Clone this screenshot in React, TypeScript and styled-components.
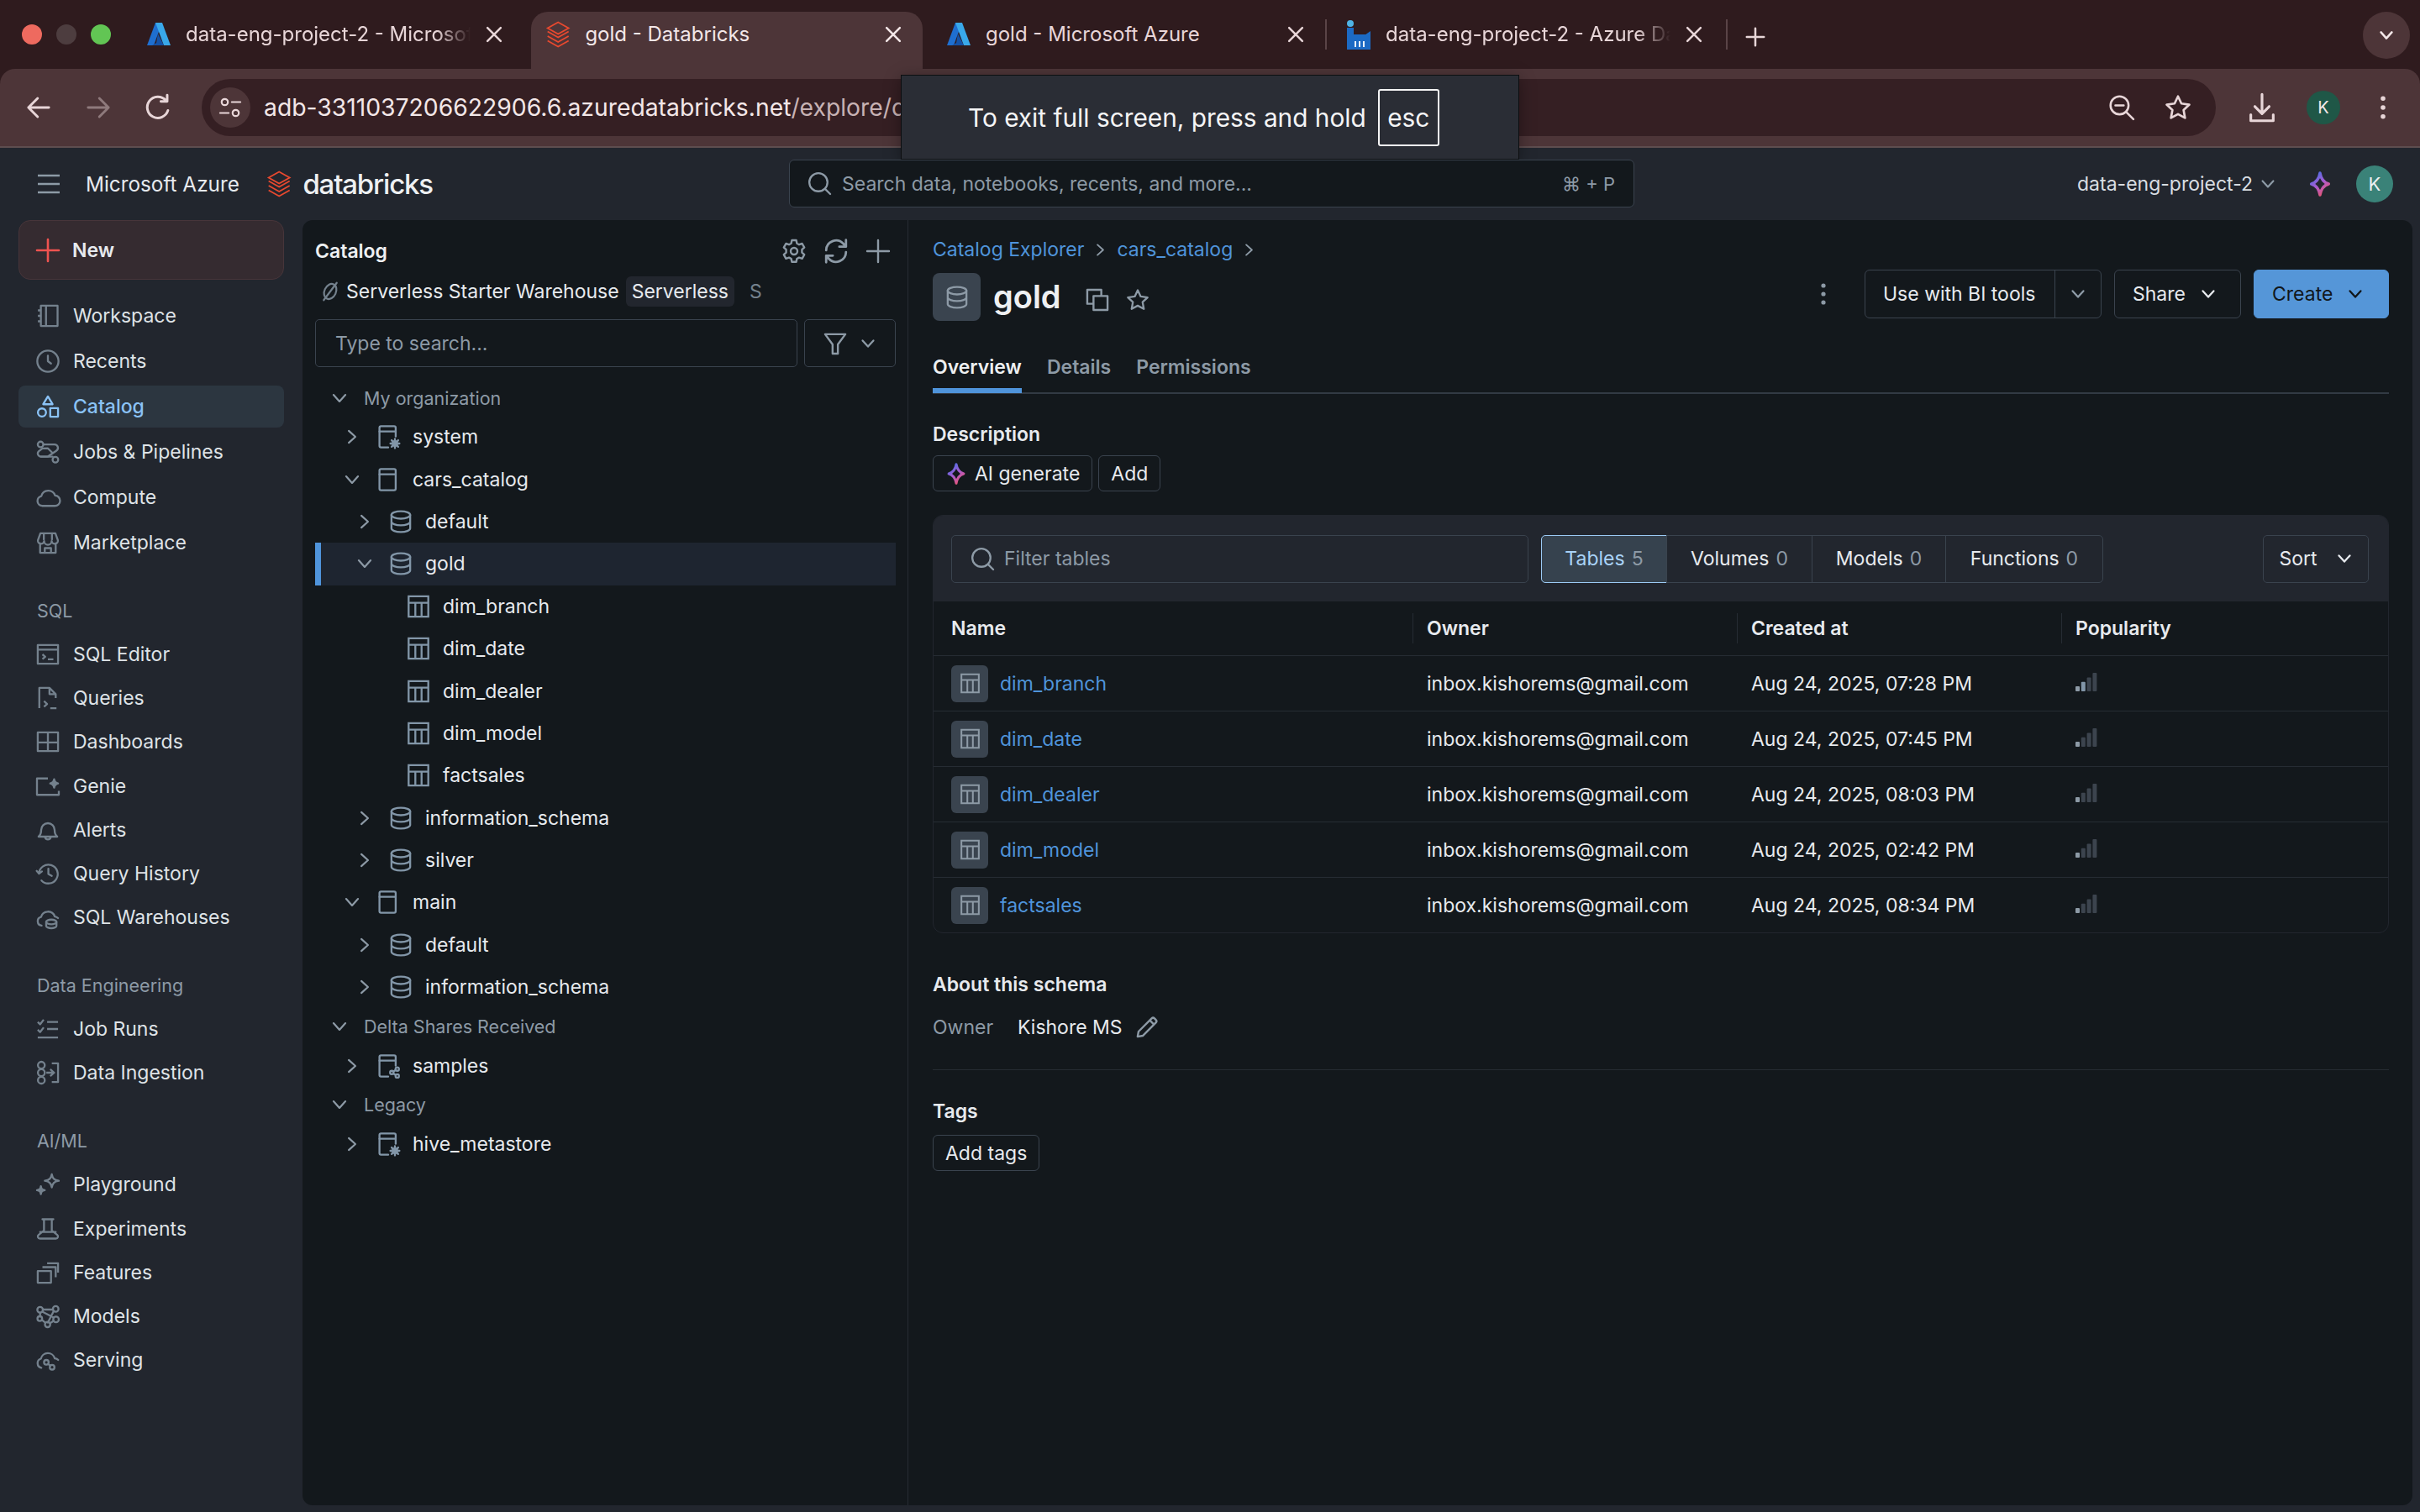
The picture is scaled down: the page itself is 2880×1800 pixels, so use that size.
import React from 'react';
import styled, { createGlobalStyle } from 'styled-components';

const GlobalStyle = createGlobalStyle`
  html, body {
    margin: 0;
    padding: 0;
    background: #22262e;
  }
  * {
    box-sizing: border-box;
  }
`;

const FONT = `Inter, "Noto Sans", "Liberation Sans", sans-serif`;

/* ---------- page frame ---------- */

const Page = styled.div`
  position: relative;
  display: flex;
  flex-direction: column;
  width: 2880px;
  height: 1800px;
  overflow: hidden;
  font-family: ${FONT};
  background: #2f1b1e;
`;

/* ---------- browser chrome ---------- */

const TabStrip = styled.div`
  display: flex;
  align-items: flex-end;
  height: 82px;
  flex: none;
`;

const Lights = styled.div`
  display: flex;
  gap: 17px;
  width: 174px;
  padding: 0 0 29px 26px;
  flex: none;
`;

const Light = styled.span<{ $color: string }>`
  width: 24px;
  height: 24px;
  border-radius: 50%;
  background: ${(p) => p.$color};
`;

const Tab = styled.div<{ $active?: boolean; $width: number; $inset: number; $end?: number }>`
  display: flex;
  align-items: center;
  gap: 17px;
  width: ${(p) => p.$width}px;
  height: 68px;
  padding: 0 ${(p) => p.$end ?? 24}px 14px ${(p) => p.$inset}px;
  flex: none;
  border-radius: 20px 20px 0 0;
  background: ${(p) => (p.$active ? '#4d3538' : 'transparent')};
  color: ${(p) => (p.$active ? '#f3e7e8' : '#e8d6d8')};
`;

const TabTitle = styled.span<{ $fade?: boolean }>`
  flex: 1;
  min-width: 0;
  overflow: hidden;
  white-space: nowrap;
  font-size: 24px;
  line-height: 32px;
  ${(p) =>
    p.$fade &&
    `-webkit-mask-image: linear-gradient(90deg, #000 88%, transparent 100%);
     mask-image: linear-gradient(90deg, #000 88%, transparent 100%);`}
`;

const TabSeparator = styled.span`
  width: 2px;
  height: 36px;
  margin-bottom: 23px;
  background: #5a4447;
  flex: none;
`;

const NewTab = styled.span`
  display: flex;
  margin: 0 0 27px 22px;
  color: #e8d6d8;
`;

const Spacer = styled.span`
  flex: 1;
`;

const TabMenu = styled.span`
  display: flex;
  align-items: center;
  justify-content: center;
  width: 56px;
  height: 56px;
  margin: 0 12px 12px 0;
  border-radius: 50%;
  background: #4d3538;
  color: #f3e7e8;
`;

const Toolbar = styled.div`
  display: flex;
  align-items: center;
  height: 94px;
  padding: 0 0 1px 28px;
  flex: none;
  border-radius: 18px 18px 0 0;
  border-bottom: 2px solid #5e4d4f;
  background: #4d3538;
  color: #e8d6d8;
`;

const ToolbarButton = styled.span<{ $dim?: boolean; $width: number }>`
  display: flex;
  align-items: center;
  justify-content: center;
  width: ${(p) => p.$width}px;
  flex: none;
  color: ${(p) => (p.$dim ? '#8f7a7c' : '#e8d6d8')};
`;

const AddressBar = styled.div`
  display: flex;
  align-items: center;
  width: 2397px;
  height: 68px;
  margin: 0 13px 0 34px;
  padding: 0 30px 0 10px;
  flex: none;
  border-radius: 34px;
  background: #351f23;
`;

const SiteChip = styled.span`
  display: flex;
  align-items: center;
  justify-content: center;
  width: 48px;
  height: 48px;
  margin-right: 16px;
  border-radius: 50%;
  background: #4d3538;
  flex: none;
`;

const UrlHost = styled.span`
  font-size: 28.3px;
  color: #f3e7e8;
  white-space: nowrap;
`;

const UrlPath = styled(UrlHost)`
  color: #c7b2b4;
`;

const AddressActions = styled.span`
  display: flex;
  align-items: center;
  gap: 37px;
  margin-left: auto;
`;

const ProfileBadge = styled.span`
  display: flex;
  align-items: center;
  justify-content: center;
  width: 40px;
  height: 40px;
  margin: 0 36px 0 11px;
  border-radius: 50%;
  background: #1f5747;
  color: #f3e7e8;
  font-size: 20px;
  flex: none;
`;

const FullscreenToast = styled.div`
  position: absolute;
  top: 89px;
  left: 1072px;
  display: flex;
  align-items: center;
  gap: 14px;
  width: 736px;
  height: 101px;
  padding: 0 0 0 79px;
  border: 1px solid #0c0e10;
  background: #2a2d35;
  color: #f4f4f5;
  font-size: 29.8px;
  white-space: nowrap;
  box-shadow: 0 4px 18px rgba(0, 0, 0, 0.35);
`;

const EscKey = styled.span`
  display: flex;
  align-items: center;
  justify-content: center;
  width: 73px;
  height: 68px;
  border: 2px solid #f4f4f5;
  border-radius: 3px;
`;

/* ---------- workspace shell ---------- */

const Shell = styled.div`
  display: flex;
  flex-direction: column;
  flex: 1;
  min-height: 0;
  background: #22262e;
`;

const TopBar = styled.div`
  position: relative;
  display: flex;
  align-items: center;
  height: 86px;
  padding: 0 32px 0 44px;
  flex: none;
`;

const MenuIcon = styled.span`
  display: flex;
  width: 28px;
  margin-right: 30px;
  color: #8d9aa6;
`;

const Brand = styled.span`
  width: 215px;
  font-size: 24.3px;
  color: #e7eaee;
  white-space: nowrap;
`;

const LogoType = styled.span`
  margin-left: 13px;
  font-size: 33px;
  font-weight: 500;
  letter-spacing: -1.2px;
  color: #eef0f2;
`;

const GlobalSearch = styled.div`
  position: absolute;
  left: 939px;
  top: 14px;
  display: flex;
  align-items: center;
  width: 1006px;
  height: 57px;
  padding: 0 22px;
  border: 1px solid #3a434e;
  border-radius: 6px;
  background: #13181c;
  color: #8d9aa6;
  font-size: 23px;
`;

const SearchText = styled.span`
  margin-left: 13px;
`;

const Shortcut = styled.span`
  margin-left: auto;
  font-size: 22px;
`;

const TopRight = styled.div`
  display: flex;
  align-items: center;
  margin-left: auto;
`;

const WorkspaceName = styled.span`
  font-size: 23px;
  color: #d9dee3;
  white-space: nowrap;
`;

const WorkspaceCaret = styled.span`
  display: flex;
  margin: 0 37px 0 8px;
  color: #8d9aa6;
`;

const Avatar = styled.span`
  display: flex;
  align-items: center;
  justify-content: center;
  width: 44px;
  height: 44px;
  margin-left: 28px;
  border-radius: 50%;
  background: #3a8278;
  color: #eef0f2;
  font-size: 22px;
`;

const Body = styled.div`
  display: flex;
  flex: 1;
  min-height: 0;
`;

/* ---------- left navigation ---------- */

const Sidebar = styled.nav`
  display: flex;
  flex-direction: column;
  width: 360px;
  padding: 0 22px;
  flex: none;
`;

const NewButton = styled.div`
  display: flex;
  align-items: center;
  gap: 15px;
  height: 71px;
  margin-bottom: 18px;
  padding: 0 20px;
  flex: none;
  border: 1px solid #47353a;
  border-radius: 14px;
  background: #352b30;
  color: #e7eaee;
  font-size: 23px;
  font-weight: 600;
`;

const NewIcon = styled.span`
  display: flex;
  color: #ef5350;
`;

const NavList = styled.div<{ $gap: number }>`
  display: flex;
  flex-direction: column;
  gap: ${(p) => p.$gap}px;
`;

const NavItem = styled.div<{ $active?: boolean }>`
  display: flex;
  align-items: center;
  gap: 17px;
  height: 50px;
  padding: 0 22px;
  border-radius: 8px;
  background: ${(p) => (p.$active ? '#2c3640' : 'transparent')};
  color: ${(p) => (p.$active ? '#8ac2f5' : '#dfe3e7')};
  font-size: 23px;
  font-weight: ${(p) => (p.$active ? 500 : 400)};
`;

const NavIcon = styled.span<{ $active?: boolean }>`
  display: flex;
  width: 26px;
  height: 26px;
  flex: none;
  color: ${(p) => (p.$active ? '#8ac2f5' : '#74818d')};
`;

const NavLabel = styled.div`
  height: 30px;
  margin: 41px 0 12px;
  padding-left: 22px;
  color: #8d9aa6;
  font-size: 21.5px;
  line-height: 30px;
`;

/* ---------- main panel ---------- */

const Panel = styled.main`
  display: flex;
  flex: 1;
  min-width: 0;
  margin: 0 9px 8px 0;
  border-radius: 12px;
  background: #13181c;
  overflow: hidden;
`;

const BrowserPane = styled.section`
  display: flex;
  flex-direction: column;
  width: 721px;
  padding: 0 14px 0 15px;
  flex: none;
  border-right: 1px solid #262c33;
`;

const PaneHeader = styled.div`
  display: flex;
  align-items: center;
  height: 72px;
  padding-top: 2px;
  flex: none;
`;

const PaneTitle = styled.span`
  color: #eef0f2;
  font-size: 23px;
  font-weight: 600;
`;

const PaneActions = styled.span`
  display: flex;
  align-items: center;
  gap: 21px;
  margin-left: auto;
  margin-right: 7px;
  color: #8d9aa6;
`;

const WarehouseRow = styled.div`
  display: flex;
  align-items: center;
  height: 36px;
  margin: -5px 0 15px;
  padding-left: 6px;
  color: #e7eaee;
  font-size: 23px;
  white-space: nowrap;
  flex: none;
`;

const WarehouseIcon = styled.span`
  display: flex;
  margin-right: 7px;
  color: #74818d;
`;

const Chip = styled.span`
  display: flex;
  align-items: center;
  height: 36px;
  margin-left: 8px;
  padding: 0 7px;
  border-radius: 6px;
  background: #22262e;
`;

const TruncatedTag = styled.span`
  margin-left: 18px;
  color: #74818d;
`;

const SearchRow = styled.div`
  display: flex;
  gap: 8px;
  height: 57px;
  flex: none;
`;

const Field = styled.div<{ $width?: number; $bg?: string; $border?: string }>`
  display: flex;
  align-items: center;
  width: ${(p) => (p.$width ? `${p.$width}px` : 'auto')};
  height: 57px;
  border: 1px solid ${(p) => p.$border || '#3a434e'};
  border-radius: 5px;
  background: ${(p) => p.$bg || 'transparent'};
  color: #8d9aa6;
  font-size: 23px;
`;

const SearchField = styled(Field)`
  padding-left: 23px;
`;

const FilterField = styled(Field)`
  justify-content: center;
  gap: 16px;
  flex: 1;
`;

const Tree = styled.div`
  display: flex;
  flex-direction: column;
  margin-top: 15px;
`;

const TreeHeading = styled.div`
  display: flex;
  align-items: center;
  gap: 17px;
  height: 43px;
  padding-left: 17px;
  color: #8d9aa6;
  font-size: 21.5px;
`;

const TreeRow = styled.div<{ $level: number; $selected?: boolean }>`
  display: flex;
  align-items: center;
  height: 50.4px;
  padding-left: ${(p) => [0, 32, 47, 110][p.$level]}px;
  background: ${(p) => (p.$selected ? '#1e2530' : 'transparent')};
  box-shadow: ${(p) => (p.$selected ? 'inset 7px 0 0 #4f94db' : 'none')};
  color: #e7eaee;
  font-size: 23px;
`;

const Caret = styled.span`
  display: flex;
  align-items: center;
  justify-content: center;
  width: 24px;
  margin-right: 18px;
  flex: none;
  color: #8d9aa6;
`;

const HeadingCaret = styled(Caret)`
  margin-right: 0;
`;

const TreeIcon = styled.span`
  display: flex;
  width: 26px;
  height: 26px;
  margin-right: 16px;
  flex: none;
  color: #8296a8;
`;

const DetailPane = styled.section`
  display: flex;
  flex-direction: column;
  flex: 1;
  min-width: 0;
  padding: 0 28px 0 29px;
`;

const Breadcrumb = styled.div`
  display: flex;
  align-items: center;
  gap: 10px;
  height: 26px;
  margin-top: 22px;
  color: #4f94db;
  font-size: 23px;
  flex: none;
`;

const Crumb = styled.span`
  display: flex;
  color: #8d9aa6;
`;

const TitleRow = styled.div`
  display: flex;
  align-items: flex-start;
  height: 92px;
  margin-top: 15px;
  flex: none;
`;

const TitleIcon = styled.span`
  display: flex;
  align-items: center;
  justify-content: center;
  width: 57px;
  height: 57px;
  margin-right: 15px;
  border-radius: 8px;
  background: #3a444f;
  color: #8d9aa6;
  flex: none;
`;

const Title = styled.h1`
  margin: 0 30px 0 0;
  color: #eef0f2;
  font-size: 38px;
  font-weight: 600;
  line-height: 57px;
`;

const TitleAction = styled.span`
  display: flex;
  align-items: center;
  height: 57px;
  margin-right: 22px;
  padding-top: 6px;
  color: #8d9aa6;
`;

const Actions = styled.div`
  display: flex;
  align-items: center;
  gap: 15px;
  height: 58px;
  margin-left: auto;
  margin-top: -4px;
`;

const Kebab = styled.span`
  display: flex;
  margin-right: 20px;
  color: #8d9aa6;
`;

const Button = styled.div<{ $primary?: boolean; $width?: number }>`
  display: flex;
  align-items: center;
  gap: 17px;
  width: ${(p) => (p.$width ? `${p.$width}px` : 'auto')};
  height: 58px;
  padding-left: 21px;
  border: 1px solid ${(p) => (p.$primary ? '#5596d8' : '#3a434e')};
  border-radius: 6px;
  background: ${(p) => (p.$primary ? '#5596d8' : 'transparent')};
  color: ${(p) => (p.$primary ? '#11161a' : '#e7eaee')};
  font-size: 23px;
`;

const SplitButton = styled(Button)`
  justify-content: space-between;
`;

const SplitCaret = styled.span`
  display: flex;
  align-items: center;
  justify-content: center;
  align-self: stretch;
  width: 55px;
  border-left: 1px solid #3a434e;
  color: #8d9aa6;
`;

const Tabs = styled.div`
  display: flex;
  gap: 30px;
  height: 52px;
  border-bottom: 2px solid #323a44;
  flex: none;
`;

const TabLink = styled.span<{ $active?: boolean }>`
  height: 51px;
  padding-top: 6px;
  border-bottom: ${(p) => (p.$active ? '6px solid #4f94db' : 'none')};
  color: ${(p) => (p.$active ? '#eef0f2' : '#8d9aa6')};
  font-size: 23px;
  font-weight: 600;
`;

const SectionTitle = styled.div<{ $top: number }>`
  margin-top: ${(p) => p.$top}px;
  color: #e7eaee;
  font-size: 23px;
  font-weight: 600;
  line-height: 30px;
`;

const SmallButtons = styled.div`
  display: flex;
  gap: 7px;
  margin-top: 10px;
`;

const SmallButton = styled.div`
  display: flex;
  align-items: center;
  gap: 9px;
  height: 43px;
  padding: 0 14px;
  border: 1px solid #3a434e;
  border-radius: 6px;
  color: #e7eaee;
  font-size: 23px;
`;

const TableCard = styled.div`
  margin-top: 28px;
  border: 1px solid #22262e;
  border-radius: 12px;
  overflow: hidden;
  flex: none;
`;

const TableToolbar = styled.div`
  display: flex;
  align-items: center;
  height: 102px;
  padding: 0 23px 0 21px;
  background: #22262e;
`;

const FilterInput = styled(Field)`
  gap: 12px;
  padding-left: 23px;
`;

const Segments = styled.div`
  display: flex;
  margin-left: 16px;
`;

const Segment = styled.div<{ $active?: boolean; $width: number }>`
  display: flex;
  align-items: center;
  justify-content: center;
  gap: 8px;
  width: ${(p) => p.$width}px;
  height: 57px;
  margin-left: -1px;
  border: 1px solid ${(p) => (p.$active ? '#9ccbf5' : '#3a434e')};
  background: ${(p) => (p.$active ? '#36424e' : 'transparent')};
  color: ${(p) => (p.$active ? '#a9d3f7' : '#e7eaee')};
  font-size: 23px;
  &:first-child {
    border-radius: 5px 0 0 5px;
  }
  &:last-child {
    border-radius: 0 5px 5px 0;
  }
`;

const Count = styled.span`
  color: #8d9aa6;
`;

const SortButton = styled(Field)`
  justify-content: center;
  gap: 22px;
  margin-left: auto;
  color: #e7eaee;
`;

const Row = styled.div<{ $head?: boolean }>`
  display: grid;
  grid-template-columns: 570px 386px 386px 1fr;
  align-items: center;
  height: ${(p) => (p.$head ? 64 : 66)}px;
  border-top: ${(p) => (p.$head ? 'none' : '1px solid #262c33')};
  color: #e7eaee;
  font-size: 23px;
`;

const HeadCell = styled.div<{ $sep?: boolean }>`
  display: flex;
  align-items: center;
  height: 36px;
  padding-left: ${(p) => (p.$sep ? 16 : 21)}px;
  border-left: ${(p) => (p.$sep ? '1px solid #262c33' : 'none')};
  font-weight: 600;
`;

const Cell = styled.div<{ $first?: boolean }>`
  display: flex;
  align-items: center;
  gap: 14px;
  padding-left: ${(p) => (p.$first ? 21 : 17)}px;
  white-space: nowrap;
`;

const RowIcon = styled.span`
  display: flex;
  align-items: center;
  justify-content: center;
  width: 44px;
  height: 44px;
  border-radius: 6px;
  background: #3a444f;
  color: #8d9aa6;
  flex: none;
`;

const TableLink = styled.span`
  color: #4f94db;
`;

const BarsSvg = styled.svg`
  margin-bottom: 3px;
`;

const OwnerRow = styled.div`
  display: flex;
  align-items: center;
  height: 30px;
  margin-top: 21px;
  font-size: 23px;
  color: #e7eaee;
`;

const OwnerLabel = styled.span`
  width: 101px;
  color: #8d9aa6;
`;

const EditIcon = styled.span`
  display: flex;
  margin-left: 16px;
  color: #8d9aa6;
`;

const Divider = styled.div`
  height: 1px;
  margin-top: 35px;
  background: #262c33;
  flex: none;
`;

const TagButton = styled(SmallButton)`
  align-self: flex-start;
  margin-top: 13px;
`;

/* ---------- drawings ---------- */

// the glyphs are drawn on a 16 grid and fill 1..15 of it
const Svg = ({ size = 26, sw = 1.25, children }: { size?: number; sw?: number; children: React.ReactNode }) => (
  <svg
    width={size}
    height={size}
    viewBox="1 1 14 14"
    overflow="visible"
    fill="none"
    stroke="currentColor"
    strokeWidth={sw}
    strokeLinecap="round"
    strokeLinejoin="round"
  >
    {children}
  </svg>
);

const ChevronDown = ({ size = 22, sw = 1.4 }: { size?: number; sw?: number }) => (
  <Svg size={size} sw={sw}>
    <path d="M3.5 5.5 8 10.5l4.5-5" />
  </Svg>
);
const ChevronRight = ({ size = 22, sw = 1.4 }: { size?: number; sw?: number }) => (
  <Svg size={size} sw={sw}>
    <path d="M5.5 3.5 10.5 8l-5 4.500" />
  </Svg>
);
const CloseGlyph = () => (
  <Svg size={22} sw={1.6}>
    <path d="m3 3 10 10M13 3 3 13" />
  </Svg>
);
const KebabGlyph = ({ size = 28 }: { size?: number }) => (
  <Svg size={size} sw={2.6}>
    <path d="M8 3h.01M8 8h.01M8 13h.01" />
  </Svg>
);
const SearchGlyph = ({ size = 27 }: { size?: number }) => (
  <Svg size={size} sw={1.2}>
    <circle cx="7.2" cy="7.2" r="5.6" />
    <path d="m11.3 11.3 3.2 3.2" />
  </Svg>
);
const PlusGlyph = ({ size = 28, sw = 1.2 }: { size?: number; sw?: number }) => (
  <Svg size={size} sw={sw}>
    <path d="M8 1.5v13M1.5 8h13" />
  </Svg>
);
const StarGlyph = ({ size = 26 }: { size?: number }) => (
  <Svg size={size} sw={1.25}>
    <path d="m8 1.800 1.900 4 4.400.6-3.200 3 .8 4.400L8 11.700l-3.900 2.100.8-4.400-3.200-3 4.400-.6z" />
  </Svg>
);
const DbGlyph = ({ size = 26 }: { size?: number }) => (
  <Svg size={size}>
    <ellipse cx="8" cy="3.700" rx="6" ry="2.400" />
    <path d="M2 3.700v8.600c0 1.300 2.700 2.400 6 2.400s6-1.100 6-2.400V3.700M2 8c0 1.300 2.700 2.400 6 2.400s6-1.100 6-2.400" />
  </Svg>
);
const TableGlyph = ({ size = 26 }: { size?: number }) => (
  <Svg size={size}>
    <path d="M1.700 1.500h12.600v13H1.700zM1.700 5.600h12.600M6 5.600v8.900M10 5.600v8.900" strokeLinecap="square" strokeLinejoin="miter" />
  </Svg>
);
const CatalogGlyph = ({ kind }: { kind?: 'gear' | 'share' }) => (
  <Svg>
    <path
      d={
        kind
          ? 'M8 14.800H3.400a1 1 0 0 1-1-1V2.200a1 1 0 0 1 1-1h8.400a1 1 0 0 1 1 1v5.600'
          : 'M3.400 14.800a1 1 0 0 1-1-1V2.200a1 1 0 0 1 1-1h8.400a1 1 0 0 1 1 1v11.600a1 1 0 0 1-1 1z'
      }
    />
    <path d="M2.400 4.600h10.400" />
    {kind === 'gear' && (
      <>
        <circle cx="12.300" cy="12.300" r="1.500" fill="currentColor" />
        <path d="M12.300 9.300v1M12.300 14.300v1M9.400 12.300h1M14.200 12.300h1M10.200 10.200l.7.7M13.700 13.700l.7.7M10.200 14.400l.7-.7M13.700 10.900l.7-.7" />
      </>
    )}
    {kind === 'share' && (
      <>
        <circle cx="10.300" cy="12.200" r="1.100" />
        <circle cx="13.800" cy="10" r="1.100" />
        <circle cx="13.800" cy="14.400" r="1.100" />
        <path d="m11.300 11.600 1.500-1M11.300 12.800l1.500 1" />
      </>
    )}
  </Svg>
);
const Sparkle = ({ size = 26 }: { size?: number }) => (
  <svg width={size} height={size} viewBox="0 0 16 16" fill="none">
    <defs>
      <linearGradient id="sparkle" x1="0.2" y1="0" x2="0.8" y2="1">
        <stop offset="0" stopColor="#4a6fe8" />
        <stop offset="0.5" stopColor="#a85bd0" />
        <stop offset="1" stopColor="#f0566a" />
      </linearGradient>
    </defs>
    <path
      d="M8 1c.7 4 2.100 6.100 5.500 7C10.100 8.900 8.700 11 8 15c-.7-4-2.100-6.100-5.500-7C5.900 7.100 7.300 5 8 1z"
      stroke="url(#sparkle)"
      strokeWidth="1.8"
      strokeLinejoin="round"
    />
  </svg>
);
const AzureLogo = () => (
  <svg width="30" height="28" viewBox="0 0 30 28">
    <path d="M11 0h8L9 27H1z" fill="#1f6fd0" />
    <path d="M11 0h8l10 27h-8z" fill="#39a8ea" />
    <path d="M14 13l7 14H7l5-3z" fill="#1452a8" />
  </svg>
);
const FactoryLogo = () => (
  <svg width="30" height="36" viewBox="0 0 30 36">
    <rect x="1" y="10" width="8" height="26" fill="#1c6ac4" />
    <path d="M1 18h28v18H1z" fill="#1c6ac4" />
    <path d="M9 28 29 14v8H9z" fill="#1c6ac4" />
    <circle cx="5" cy="5" r="4" fill="#4fb4e6" />
    <path d="M10 26h2v7h-2zM15 26h2v7h-2zM20 26h2v7h-2z" fill="#e8f2fb" />
  </svg>
);
const DatabricksLogo = ({ height = 32 }: { height?: number }) => (
  <svg width={height * 0.95} height={height} viewBox="0 0 30 32" fill="none" stroke="#e8492f" strokeWidth="1.8">
    <path d="M15 1.500 27.500 8.500 15 15.500 2.500 8.500z" />
    <path d="M2.500 12.500 15 19.500 27.500 12.500M2.500 18 15 25 27.500 18M2.500 23.500 15 30.500 27.500 23.500" />
  </svg>
);

const icons: Record<string, React.ReactNode> = {
  workspace: (
    <Svg>
      <path d="M3.500 1.500h10.700v13H3.500zM6.800 1.500v13M1.600 4.500h2M1.600 8h2M1.600 11.500h2" strokeLinecap="butt" />
    </Svg>
  ),
  recents: (
    <Svg>
      <circle cx="8" cy="8" r="6.800" />
      <path d="M8 4.500V8l2 1.500" />
    </Svg>
  ),
  catalog: (
    <Svg>
      <path d="M8 1.500 11 6.500H5zM9.500 9h5v5.500h-5z" />
      <circle cx="4.200" cy="11.800" r="2.600" />
    </Svg>
  ),
  jobs: (
    <Svg>
      <circle cx="3.300" cy="3.200" r="1.800" />
      <circle cx="12.800" cy="13" r="1.800" />
      <path d="M5.200 3.200h7a2.200 2.200 0 0 1 1.300 4L8 11H3.500a2 2 0 0 1-1.300-3.500L4.500 5.800l3.500-.1 3 3" />
      <path d="M3.500 11h7.500" />
    </Svg>
  ),
  compute: (
    <Svg>
      <path d="M4.200 13.500a3.200 3.200 0 0 1-.4-6.300 4.600 4.600 0 0 1 8.800-.3 3.300 3.300 0 0 1-.2 6.600z" />
    </Svg>
  ),
  marketplace: (
    <Svg>
      <path d="M3 8.500v6h10v-6M1.600 6.500 3.200 2h9.600l1.600 4.500a2 2 0 0 1-4 .5 2.400 2.400 0 0 1-4.800 0 2 2 0 0 1-4-.5zM5.400 2v4M10.600 2v4M6 14.500v-3h4v3" />
    </Svg>
  ),
  editor: (
    <Svg>
      <path d="M1.500 2h13v12h-13zM1.500 5h13M4.500 8l1.800 1.500-1.800 1.500M8 11.200h3.500" strokeLinecap="butt" />
    </Svg>
  ),
  queries: (
    <Svg>
      <path d="M2.500 14.500V1.500h6.500l4 4v2.500M9 1.500v4h4M5.500 10l2 1.800-2 1.800M9.500 14.500h4" strokeLinecap="butt" />
    </Svg>
  ),
  dashboards: (
    <Svg>
      <path d="M1.500 2h13v12h-13zM1.500 8.500h13M8 2v12" strokeLinecap="butt" />
    </Svg>
  ),
  genie: (
    <Svg>
      <path d="M8 3H1v10.500h14V11" strokeLinecap="butt" />
      <path
        d="M12 3.500c.3 1.600.9 2.300 2.500 2.700-1.600.4-2.200 1.100-2.500 2.700-.3-1.600-.9-2.300-2.500-2.700 1.600-.4 2.200-1.100 2.500-2.700z"
        fill="currentColor"
      />
    </Svg>
  ),
  alerts: (
    <Svg>
      <path d="M2 12.300c1.300-1 1.700-2.200 1.700-4.300a4.300 4.300 0 0 1 8.600 0c0 2.100.4 3.300 1.700 4.300zM6.200 12.800a1.900 1.900 0 0 0 3.600 0" />
    </Svg>
  ),
  history: (
    <Svg>
      <path d="M2.300 8a6 6 0 1 1 1.600 4.400M.8 6.300 2.300 8l1.900-1.400M8.300 4.800v3.500l2.200 1.200" />
    </Svg>
  ),
  warehouses: (
    <Svg>
      <path d="M4 13.300a2.800 2.800 0 0 1-.4-5.500 4.600 4.600 0 0 1 8.800-.3 3 3 0 0 1 2.100 1" />
      <ellipse cx="10.200" cy="11" rx="3.300" ry="1.500" />
      <path d="M6.900 11v2.500c0 .8 1.500 1.500 3.300 1.500s3.300-.7 3.300-1.500V11" />
    </Svg>
  ),
  runs: (
    <Svg>
      <path d="M1.500 3.500 3 5l2.300-3M1.500 8.500 3 10l2.300-3M7.500 3.500h7M7.500 8h7M1.500 13.500h13" strokeLinecap="butt" />
    </Svg>
  ),
  ingestion: (
    <Svg>
      <circle cx="3.800" cy="3.200" r="2.200" />
      <circle cx="3.800" cy="8" r="2.200" />
      <circle cx="3.800" cy="12.800" r="2.200" />
      <path d="M7 8h5M9.500 5.800 12 8l-2.500 2.200M10.500 2h4v12h-4" strokeLinecap="butt" />
    </Svg>
  ),
  playground: (
    <Svg>
      <path d="M10.500 1.500c.5 2.600 1.500 3.700 4.500 4.200-3 .5-4 1.600-4.500 4.200-.5-2.600-1.500-3.700-4.500-4.200 3-.5 4-1.600 4.500-4.200z" />
      <path
        d="M3.500 9.200c.3 1.700.8 2.200 2.500 2.500-1.700.3-2.200.8-2.500 2.500-.3-1.700-.8-2.200-2.500-2.500 1.700-.3 2.200-.8 2.500-2.500z"
        fill="currentColor"
      />
    </Svg>
  ),
  experiments: (
    <Svg>
      <path d="M4.500 1.800h7M5.500 1.800V9L2 11.800c-.9.800-.4 2.400.9 2.400h10.200c1.300 0 1.800-1.600.9-2.400L10.500 9V1.800M3 10h10" />
    </Svg>
  ),
  features: (
    <Svg>
      <path d="M1.500 7h8.500v7.500H1.500zM4.500 4.500h8.500v6.500M7.500 2h7v6" strokeLinecap="butt" />
    </Svg>
  ),
  models: (
    <Svg>
      <circle cx="3" cy="3.800" r="1.800" />
      <circle cx="13" cy="3.300" r="1.800" />
      <circle cx="2.800" cy="9.500" r="1.500" />
      <circle cx="13.200" cy="10" r="1.800" />
      <circle cx="7.800" cy="13.300" r="1.700" />
      <path d="M4.800 3.700h6.400M4.400 5l7.300 3.800M3 5.600v2.400M4.200 10.300l2.300 2M11.700 11l-2.400 1.500M11.800 4.500 8 12" />
    </Svg>
  ),
  serving: (
    <Svg>
      <path d="M3.800 13a3 3 0 0 1-.3-5.800A4.600 4.600 0 0 1 12.400 7a3 3 0 0 1 2.200 1" />
      <circle cx="7" cy="9.500" r="1.500" />
      <circle cx="10.700" cy="12.700" r="1.500" />
      <path d="m8 10.500 1.600 1.200" />
    </Svg>
  ),
};

/* ---------- data ---------- */

const mainNav = [
  ['workspace', 'Workspace'],
  ['recents', 'Recents'],
  ['catalog', 'Catalog'],
  ['jobs', 'Jobs & Pipelines'],
  ['compute', 'Compute'],
  ['marketplace', 'Marketplace'],
];

const navSections = [
  {
    label: 'SQL',
    items: [
      ['editor', 'SQL Editor'],
      ['queries', 'Queries'],
      ['dashboards', 'Dashboards'],
      ['genie', 'Genie'],
      ['alerts', 'Alerts'],
      ['history', 'Query History'],
      ['warehouses', 'SQL Warehouses'],
    ],
  },
  {
    label: 'Data Engineering',
    items: [
      ['runs', 'Job Runs'],
      ['ingestion', 'Data Ingestion'],
    ],
  },
  {
    label: 'AI/ML',
    items: [
      ['playground', 'Playground'],
      ['experiments', 'Experiments'],
      ['features', 'Features'],
      ['models', 'Models'],
      ['serving', 'Serving'],
    ],
  },
];

type TreeNode = {
  heading?: boolean;
  level?: number;
  name: string;
  open?: boolean;
  icon?: 'system' | 'catalog' | 'share' | 'db' | 'table';
  selected?: boolean;
};

const tree: TreeNode[] = [
  { heading: true, name: 'My organization' },
  { level: 1, name: 'system', icon: 'system' },
  { level: 1, name: 'cars_catalog', icon: 'catalog', open: true },
  { level: 2, name: 'default', icon: 'db' },
  { level: 2, name: 'gold', icon: 'db', open: true, selected: true },
  { level: 3, name: 'dim_branch', icon: 'table' },
  { level: 3, name: 'dim_date', icon: 'table' },
  { level: 3, name: 'dim_dealer', icon: 'table' },
  { level: 3, name: 'dim_model', icon: 'table' },
  { level: 3, name: 'factsales', icon: 'table' },
  { level: 2, name: 'information_schema', icon: 'db' },
  { level: 2, name: 'silver', icon: 'db' },
  { level: 1, name: 'main', icon: 'catalog', open: true },
  { level: 2, name: 'default', icon: 'db' },
  { level: 2, name: 'information_schema', icon: 'db' },
  { heading: true, name: 'Delta Shares Received' },
  { level: 1, name: 'samples', icon: 'share' },
  { heading: true, name: 'Legacy' },
  { level: 1, name: 'hive_metastore', icon: 'system' },
];

const treeIcon = (icon: TreeNode['icon']) => {
  if (icon === 'db') return <DbGlyph />;
  if (icon === 'table') return <TableGlyph />;
  if (icon === 'system') return <CatalogGlyph kind="gear" />;
  if (icon === 'share') return <CatalogGlyph kind="share" />;
  return <CatalogGlyph />;
};

const tables = [
  ['dim_branch', 'Aug 24, 2025, 07:28 PM', 2],
  ['dim_date', 'Aug 24, 2025, 07:45 PM', 1],
  ['dim_dealer', 'Aug 24, 2025, 08:03 PM', 1],
  ['dim_model', 'Aug 24, 2025, 02:42 PM', 1],
  ['factsales', 'Aug 24, 2025, 08:34 PM', 1],
] as const;

const PopularityBars = ({ level }: { level: number }) => (
  <BarsSvg width="26" height="22" viewBox="0 0 26 22">
    {[0, 1, 2, 3].map((i) => (
      <rect
        key={i}
        x={i * 6.8}
        y={16 - i * 5.3}
        width="5"
        height={6 + i * 5.3}
        rx="1"
        fill={i === 0 ? '#8d9aa6' : i < level ? '#8296a8' : '#3c444e'}
      />
    ))}
  </BarsSvg>
);

export default function App() {
  return (
    <Page>
      <GlobalStyle />

      <TabStrip>
        <Lights>
          <Light $color="#ee6a5f" />
          <Light $color="#4d3d3f" />
          <Light $color="#62c554" />
        </Lights>
        <Tab $width={458} $inset={0} $end={33}>
          <AzureLogo />
          <TabTitle $fade>data-eng-project-2 - Microsoft Azure</TabTitle>
          <CloseGlyph />
        </Tab>
        <Tab $active $width={466} $inset={17}>
          <DatabricksLogo />
          <TabTitle>gold - Databricks</TabTitle>
          <CloseGlyph />
        </Tab>
        <Tab $width={479} $inset={28}>
          <AzureLogo />
          <TabTitle>gold - Microsoft Azure</TabTitle>
          <CloseGlyph />
        </Tab>
        <TabSeparator />
        <Tab $width={475} $inset={23} $end={27}>
          <FactoryLogo />
          <TabTitle $fade>data-eng-project-2 - Azure Data Factory</TabTitle>
          <CloseGlyph />
        </Tab>
        <TabSeparator />
        <NewTab>
          <PlusGlyph size={22} sw={1.6} />
        </NewTab>
        <Spacer />
        <TabMenu>
          <ChevronDown size={20} sw={1.8} />
        </TabMenu>
      </TabStrip>

      <Toolbar>
        <ToolbarButton $width={36}>
          <Svg size={34} sw={1.2}>
            <path d="M13 8H3M7.500 3.500 3 8l4.500 4.500" />
          </Svg>
        </ToolbarButton>
        <ToolbarButton $dim $width={106}>
          <Svg size={34} sw={1.2}>
            <path d="M3 8h10M8.500 3.500 13 8l-4.500 4.500" />
          </Svg>
        </ToolbarButton>
        <ToolbarButton $width={36}>
          <Svg size={32} sw={1.3}>
            <path d="M13.200 9.500A5.500 5.500 0 1 1 12 4.200M12.800 1.500v3.300H9.500" />
          </Svg>
        </ToolbarButton>
        <AddressBar>
          <SiteChip>
            <Svg size={26} sw={1.2}>
              <circle cx="4.500" cy="4.500" r="2" />
              <circle cx="11.500" cy="11.500" r="2" />
              <path d="M9 4.500h5.500M1.500 11.500H7" />
            </Svg>
          </SiteChip>
          <UrlHost>adb-3311037206622906.6.azuredatabricks.net</UrlHost>
          <UrlPath>/explore/d</UrlPath>
          <AddressActions>
            <Svg size={30} sw={1.2}>
              <circle cx="6.800" cy="6.800" r="5" />
              <path d="m10.500 10.500 4 4M4.500 6.800h4.600" />
            </Svg>
            <StarGlyph size={30} />
          </AddressActions>
        </AddressBar>
        <ToolbarButton $width={84}>
          <Svg size={34} sw={1.3}>
            <path d="M8 1.500v9M4.500 7.500 8 11l3.500-3.500M2.500 11.500v3h11v-3" />
          </Svg>
        </ToolbarButton>
        <ProfileBadge>K</ProfileBadge>
        <KebabGlyph size={30} />
      </Toolbar>

      <FullscreenToast>
        To exit full screen, press and hold
        <EscKey>esc</EscKey>
      </FullscreenToast>

      <Shell>
        <TopBar>
          <MenuIcon>
            <Svg size={28} sw={1.3}>
              <path d="M1.500 3h13M1.500 8h13M1.500 13h13" strokeLinecap="butt" />
            </Svg>
          </MenuIcon>
          <Brand>Microsoft Azure</Brand>
          <DatabricksLogo height={32} />
          <LogoType>databricks</LogoType>
          <GlobalSearch>
            <SearchGlyph />
            <SearchText>Search data, notebooks, recents, and more...</SearchText>
            <Shortcut>⌘ + P</Shortcut>
          </GlobalSearch>
          <TopRight>
            <WorkspaceName>data-eng-project-2</WorkspaceName>
            <WorkspaceCaret>
              <ChevronDown size={20} sw={1.5} />
            </WorkspaceCaret>
            <Sparkle size={30} />
            <Avatar>K</Avatar>
          </TopRight>
        </TopBar>

        <Body>
          <Sidebar>
            <NewButton>
              <NewIcon>
                <PlusGlyph size={28} sw={1.3} />
              </NewIcon>
              New
            </NewButton>
            <NavList $gap={4}>
              {mainNav.map(([key, label]) => (
                <NavItem key={key} $active={key === 'catalog'}>
                  <NavIcon $active={key === 'catalog'}>{icons[key]}</NavIcon>
                  {label}
                </NavItem>
              ))}
            </NavList>
            {navSections.map((section) => (
              <div key={section.label}>
                <NavLabel>{section.label}</NavLabel>
                <NavList $gap={2.2}>
                  {section.items.map(([key, label]) => (
                    <NavItem key={key}>
                      <NavIcon>{icons[key]}</NavIcon>
                      {label}
                    </NavItem>
                  ))}
                </NavList>
              </div>
            ))}
          </Sidebar>

          <Panel>
            <BrowserPane>
              <PaneHeader>
                <PaneTitle>Catalog</PaneTitle>
                <PaneActions>
                  <Svg size={28} sw={1.2}>
                    <circle cx="8" cy="8" r="2" />
                    <path d="M6.700 1.500h2.600l.4 1.900 1.300.7 1.800-.6 1.300 2.300-1.400 1.300v1.700l1.400 1.300-1.300 2.300-1.800-.6-1.300.7-.4 1.900H6.700l-.4-1.900-1.300-.7-1.800.6-1.300-2.300 1.400-1.300V7.100L1.900 5.800l1.300-2.300 1.800.6 1.300-.7z" />
                  </Svg>
                  <Svg size={30} sw={1.3}>
                    <path d="M2.500 7.500A5.500 5.500 0 0 1 12 3.800l1.500 1.700M13.500 1.800v3.700H9.800M13.500 8.500A5.500 5.500 0 0 1 4 12.200l-1.500-1.700M2.500 14.200v-3.700h3.700" />
                  </Svg>
                  <PlusGlyph />
                </PaneActions>
              </PaneHeader>
              <WarehouseRow>
                <WarehouseIcon>
                  <Svg size={24} sw={1.3}>
                    <ellipse cx="8" cy="8" rx="4" ry="5.500" transform="rotate(25 8 8)" />
                    <path d="M12.500 2 3.500 14" />
                  </Svg>
                </WarehouseIcon>
                Serverless Starter Warehouse
                <Chip>Serverless</Chip>
                <TruncatedTag>S</TruncatedTag>
              </WarehouseRow>
              <SearchRow>
                <SearchField $width={574}>Type to search...</SearchField>
                <FilterField>
                  <Svg size={26} sw={1.3}>
                    <path d="M1.500 2h13L9.700 8.500v6H6.300v-6z" />
                  </Svg>
                  <ChevronDown size={20} sw={1.6} />
                </FilterField>
              </SearchRow>
              <Tree>
                {tree.map((node, i) =>
                  node.heading ? (
                    <TreeHeading key={i}>
                      <HeadingCaret>
                        <ChevronDown />
                      </HeadingCaret>
                      {node.name}
                    </TreeHeading>
                  ) : (
                    <TreeRow key={i} $level={node.level ?? 1} $selected={node.selected}>
                      {node.level !== 3 && <Caret>{node.open ? <ChevronDown /> : <ChevronRight />}</Caret>}
                      <TreeIcon>{treeIcon(node.icon)}</TreeIcon>
                      {node.name}
                    </TreeRow>
                  ),
                )}
              </Tree>
            </BrowserPane>

            <DetailPane>
              <Breadcrumb>
                Catalog Explorer
                <Crumb>
                  <ChevronRight size={19} sw={1.4} />
                </Crumb>
                cars_catalog
                <Crumb>
                  <ChevronRight size={19} sw={1.4} />
                </Crumb>
              </Breadcrumb>
              <TitleRow>
                <TitleIcon>
                  <DbGlyph size={26} />
                </TitleIcon>
                <Title>gold</Title>
                <TitleAction>
                  <Svg size={26} sw={1.3}>
                    <path d="M5 10.500H1.500V1.500h9V5M5.500 5.500h9v9h-9z" strokeLinecap="butt" />
                  </Svg>
                </TitleAction>
                <TitleAction>
                  <StarGlyph size={26} />
                </TitleAction>
                <Actions>
                  <Kebab>
                    <KebabGlyph />
                  </Kebab>
                  <SplitButton $width={282}>
                    Use with BI tools
                    <SplitCaret>
                      <ChevronDown size={20} sw={1.6} />
                    </SplitCaret>
                  </SplitButton>
                  <Button $width={151}>
                    Share
                    <ChevronDown size={20} sw={1.6} />
                  </Button>
                  <Button $primary $width={161}>
                    Create
                    <ChevronDown size={20} sw={1.6} />
                  </Button>
                </Actions>
              </TitleRow>
              <Tabs>
                <TabLink $active>Overview</TabLink>
                <TabLink>Details</TabLink>
                <TabLink>Permissions</TabLink>
              </Tabs>
              <SectionTitle $top={33}>Description</SectionTitle>
              <SmallButtons>
                <SmallButton>
                  <Sparkle size={26} />
                  AI generate
                </SmallButton>
                <SmallButton>Add</SmallButton>
              </SmallButtons>
              <TableCard>
                <TableToolbar>
                  <FilterInput $width={687}>
                    <SearchGlyph />
                    Filter tables
                  </FilterInput>
                  <Segments>
                    <Segment $active $width={150}>
                      Tables <Count>5</Count>
                    </Segment>
                    <Segment $width={174}>
                      Volumes <Count>0</Count>
                    </Segment>
                    <Segment $width={160}>
                      Models <Count>0</Count>
                    </Segment>
                    <Segment $width={188}>
                      Functions <Count>0</Count>
                    </Segment>
                  </Segments>
                  <SortButton $width={126}>
                    Sort
                    <ChevronDown size={20} sw={1.6} />
                  </SortButton>
                </TableToolbar>
                <Row $head>
                  <HeadCell>Name</HeadCell>
                  <HeadCell $sep>Owner</HeadCell>
                  <HeadCell $sep>Created at</HeadCell>
                  <HeadCell $sep>Popularity</HeadCell>
                </Row>
                {tables.map(([name, created, level]) => (
                  <Row key={name}>
                    <Cell $first>
                      <RowIcon>
                        <TableGlyph size={23} />
                      </RowIcon>
                      <TableLink>{name}</TableLink>
                    </Cell>
                    <Cell>inbox.kishorems@gmail.com</Cell>
                    <Cell>{created}</Cell>
                    <Cell>
                      <PopularityBars level={level} />
                    </Cell>
                  </Row>
                ))}
              </TableCard>
              <SectionTitle $top={46}>About this schema</SectionTitle>
              <OwnerRow>
                <OwnerLabel>Owner</OwnerLabel>
                Kishore MS
                <EditIcon>
                  <Svg size={26} sw={1.3}>
                    <path d="m2 14 .6-3.300L11 2.300a1.300 1.300 0 0 1 1.800 0l.9.900a1.300 1.300 0 0 1 0 1.800L5.300 13.400zM9.800 3.500l2.700 2.700" />
                  </Svg>
                </EditIcon>
              </OwnerRow>
              <Divider />
              <SectionTitle $top={34}>Tags</SectionTitle>
              <TagButton>Add tags</TagButton>
            </DetailPane>
          </Panel>
        </Body>
      </Shell>
    </Page>
  );
}
